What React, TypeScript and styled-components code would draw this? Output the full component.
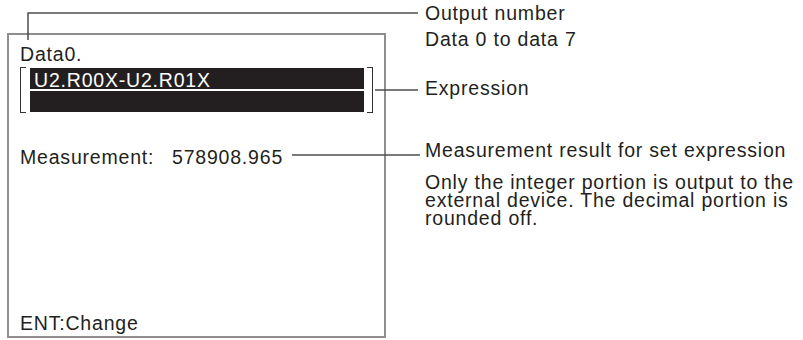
import styled, { createGlobalStyle } from "styled-components"

const GlobalStyle = createGlobalStyle`
  body {
    margin: 0;
    background: #fff;
    font-family: "Liberation Sans", Arial, sans-serif;
    color: #231f20;
  }
`

const Figure = styled.div`
  position: relative;
  width: 803px;
  height: 340px;
  display: grid;
  grid-template-columns: 425px 1fr;
  overflow: hidden;
  font-size: 19.5px;
  letter-spacing: 0.8px;
`

const Screen = styled.div`
  margin: 33px 0 0 7px;
  width: 379px;
  height: 305px;
  box-sizing: border-box;
  border: 2px solid #8e8e8e;
  padding: 8px 0 2px 11px;
  display: flex;
  flex-direction: column;
`

const Line = styled.div`
  line-height: 22px;
  white-space: nowrap;
`

const ExprBlock = styled.div`
  display: flex;
  align-items: stretch;
  height: 46px;
  margin-top: 2px;
`

const Bracket = styled.div<{ $side: "left" | "right" }>`
  width: 5px;
  border: 1.5px solid #333;
  ${p => (p.$side === "left" ? "border-right: none;" : "border-left: none;")}
  margin: ${p => (p.$side === "left" ? "0 4px 0 0" : "0 0 0 3px")};
`

const Bars = styled.div`
  width: 334px;
  display: flex;
  flex-direction: column;
  gap: 2px;
  padding-top: 1px;
`

const Bar = styled.div`
  height: 21px;
  box-sizing: border-box;
  background: #231f20;
  color: #fff;
  padding: 0 0 0 4px;
  line-height: 25px;
  white-space: nowrap;
`

const Row = styled.div`
  display: flex;
  line-height: 22px;
  margin-top: 33px;
  white-space: nowrap;
`

const Label = styled.span`
  width: 152px;
`

const Spacer = styled.div`
  flex: 1;
`

const Notes = styled.div`
  display: flex;
  flex-direction: column;
  white-space: nowrap;
`

const Note = styled.div<{ $top: number }>`
  line-height: 22px;
  margin-top: ${p => p.$top}px;
`

const Para = styled.div`
  line-height: 18px;
  margin-top: 12px;
`

const Leaders = styled.svg`
  position: absolute;
  left: 0;
  top: 0;
  pointer-events: none;
`

export default function App() {
  return (
    <>
      <GlobalStyle />
      <Figure>
        <Screen>
          <Line>Data0.</Line>
          <ExprBlock>
            <Bracket $side="left" />
            <Bars>
              <Bar>U2.R00X-U2.R01X</Bar>
              <Bar />
            </Bars>
            <Bracket $side="right" />
          </ExprBlock>
          <Row>
            <Label>Measurement:</Label>
            <span>578908.965</span>
          </Row>
          <Spacer />
          <Line>ENT:Change</Line>
        </Screen>

        <Notes>
          <Note $top={2}>Output number</Note>
          <Note $top={4}>Data 0 to data 7</Note>
          <Note $top={27}>Expression</Note>
          <Note $top={40}>Measurement result for set expression</Note>
          <Para>
            Only the integer portion is output to the<br />
            external device. The decimal portion is<br />
            rounded off.
          </Para>
        </Notes>

        {/* leader lines of the figure */}
        <Leaders width="803" height="340">
          <g stroke="#4d4d4d" strokeWidth="1.5" fill="none">
            <polyline points="28,40 28,13 418,13" />
            <line x1="375" y1="90" x2="418" y2="90" />
            <line x1="292" y1="155" x2="420" y2="155" />
          </g>
        </Leaders>
      </Figure>
    </>
  )
}
